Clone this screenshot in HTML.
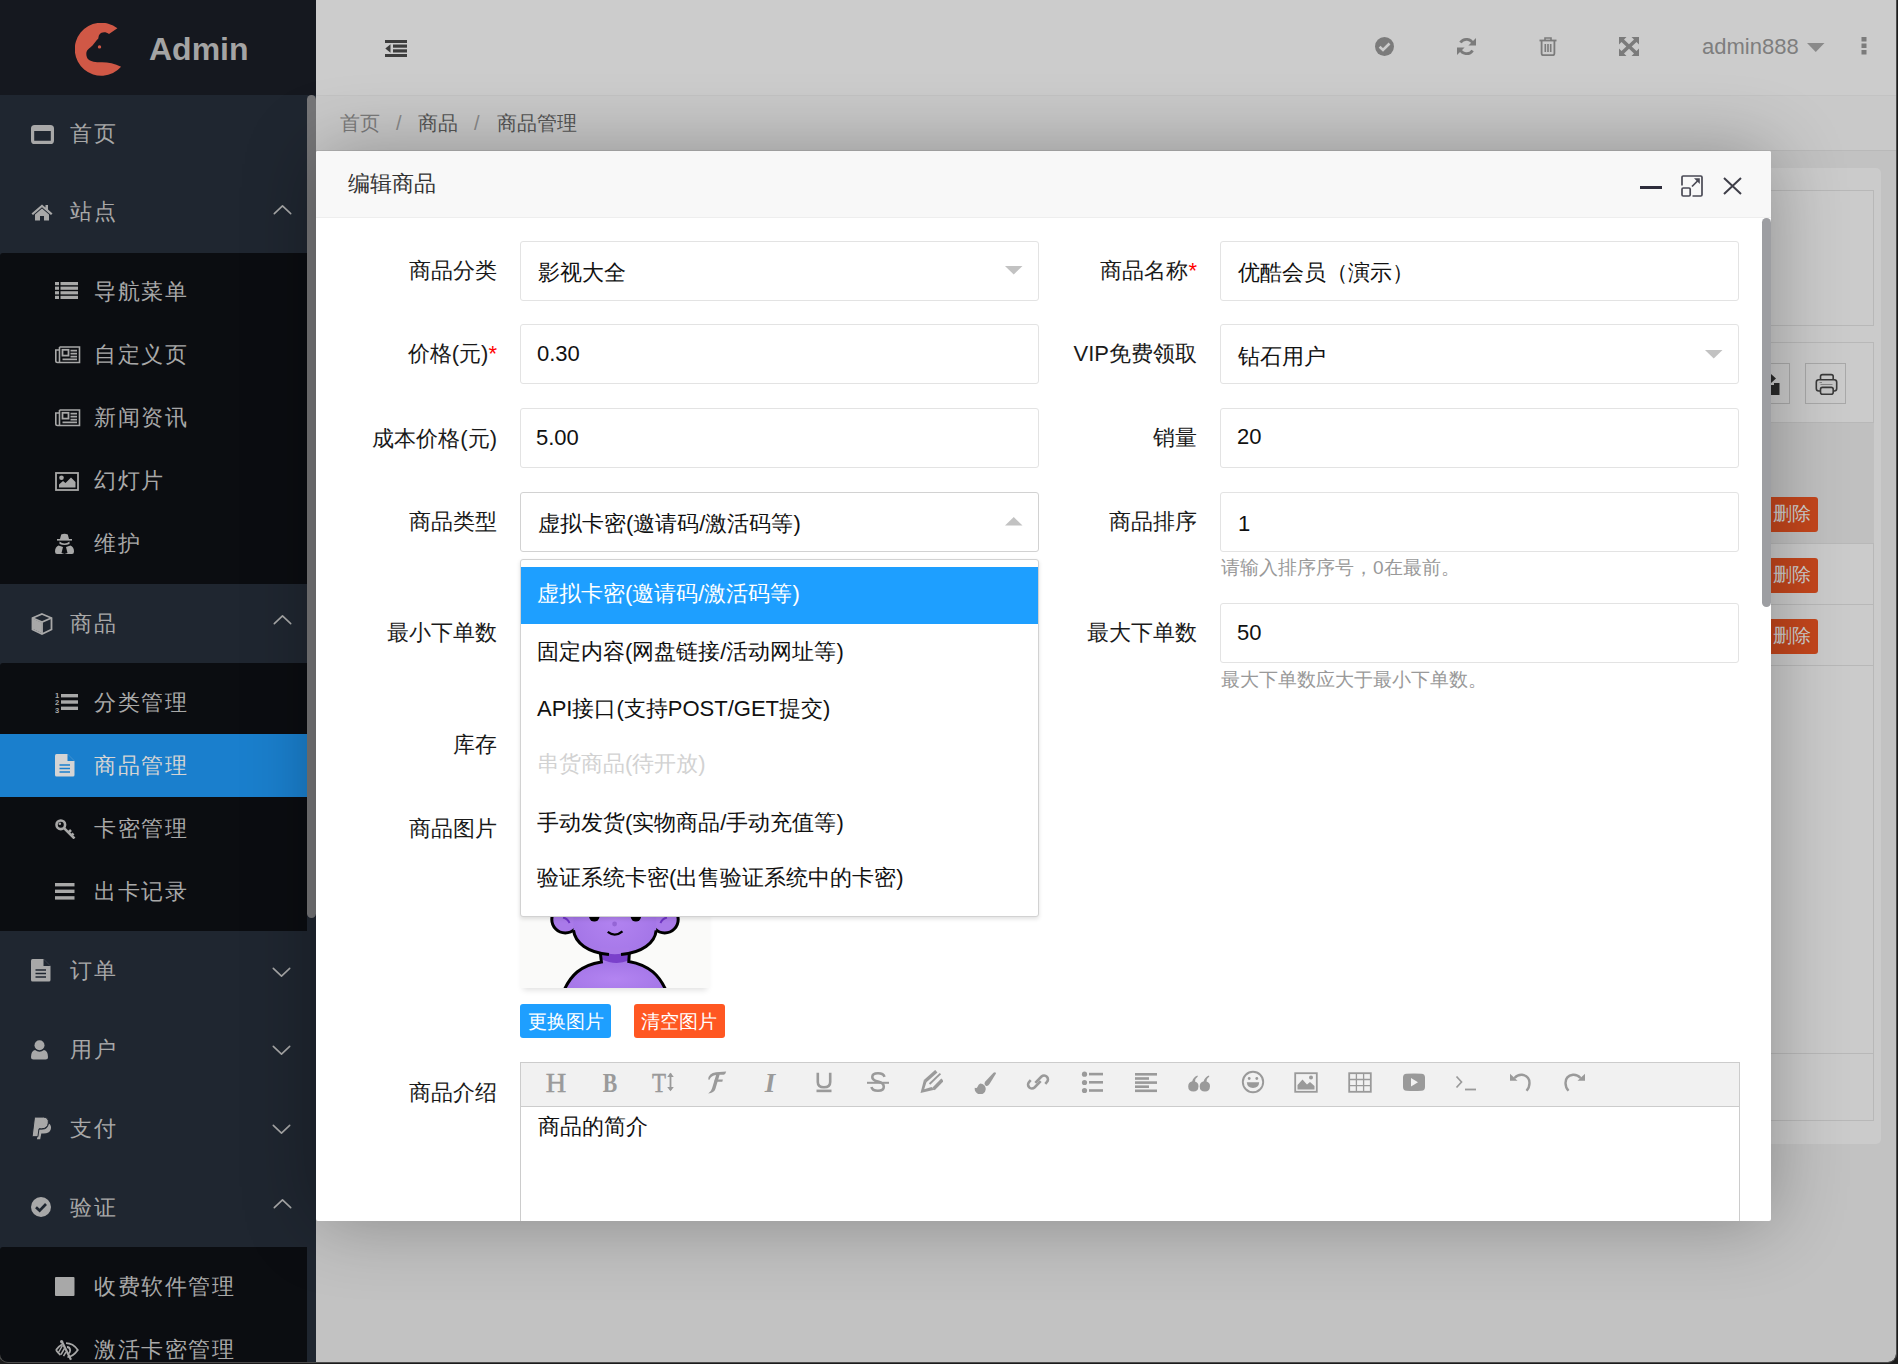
<!DOCTYPE html>
<html><head><meta charset="utf-8"><style>
html,body{margin:0;padding:0;width:1898px;height:1364px;overflow:hidden;background:#c2c2c2;font-family:"Liberation Sans",sans-serif}
.t{position:absolute;white-space:nowrap}
.b{position:absolute}
</style></head><body>
<div class="b" style="left:316px;top:0px;width:1582px;height:95px;background:#cccccc"></div>
<div class="b" style="left:316px;top:95px;width:1582px;height:1px;background:#c3c3c3"></div>
<div class="b" style="left:316px;top:96px;width:1582px;height:1268px;background:#c2c2c2"></div>
<div class="b" style="left:316px;top:96px;width:1582px;height:54px;background:#c9c9c9"></div>
<div class="b" style="left:316px;top:150px;width:1582px;height:1px;background:#b9b9b9"></div>
<div class="b" style="left:1580px;top:168px;width:301px;height:976px;background:#cbcbcb;border-radius:5px"></div>
<div class="b" style="left:1580px;top:190px;width:294px;height:136px;border:1px solid #b8b8b8;box-sizing:border-box"></div>
<div class="b" style="left:1580px;top:342px;width:294px;height:779px;border:1px solid #b8b8b8;box-sizing:border-box"></div>
<div class="b" style="left:1580px;top:422px;width:294px;height:1px;background:#b8b8b8"></div>
<div class="b" style="left:1580px;top:423px;width:294px;height:121px;background:#c0c0c0"></div>
<div class="b" style="left:1580px;top:543px;width:294px;height:1px;background:#b8b8b8"></div>
<div class="b" style="left:1580px;top:604px;width:294px;height:1px;background:#b8b8b8"></div>
<div class="b" style="left:1580px;top:665px;width:294px;height:1px;background:#b8b8b8"></div>
<div class="b" style="left:1580px;top:1053px;width:294px;height:1px;background:#b8b8b8"></div>
<div class="b" style="left:1745px;top:363px;width:45px;height:41px;border:1px solid #a9a9a9;box-sizing:border-box"></div>
<svg class="b" style="left:1771px;top:374px;" width="10" height="22" viewBox="0 0 10 22"><path d="M0 0 L5 4.5 L0 9 Z" fill="#2a2a2a"/><path d="M0 11 H3 V9 H8.5 V21 H0 Z" fill="#2a2a2a"/></svg>
<div class="b" style="left:1805px;top:363px;width:41px;height:41px;border:1px solid #a9a9a9;box-sizing:border-box"></div>
<svg class="b" style="left:1815px;top:373px;" width="23" height="23" viewBox="0 0 23 23"><rect x="5.5" y="1.6" width="12.7" height="6" rx="2" fill="none" stroke="#3a3a3a" stroke-width="1.6"/><rect x="1.3" y="6.8" width="20.4" height="11.2" rx="2.5" fill="#c6c6c6" stroke="#3a3a3a" stroke-width="1.6"/><path d="M4.5 9.5 H7 M5.5 11.5 H17.5" stroke="#777" stroke-width="0.8"/><rect x="5.5" y="14.4" width="12.7" height="6.8" rx="2" fill="#c6c6c6" stroke="#3a3a3a" stroke-width="1.6"/></svg>
<div class="b" style="left:1740px;top:497px;width:78px;height:35px;background:#c4461c;border-radius:3px"></div>
<div class="t" style="left:1773px;top:504px;font-size:19px;line-height:19px;color:#d0d0d0;font-weight:normal;">删除</div>
<div class="b" style="left:1740px;top:558px;width:78px;height:35px;background:#c4461c;border-radius:3px"></div>
<div class="t" style="left:1773px;top:565px;font-size:19px;line-height:19px;color:#d0d0d0;font-weight:normal;">删除</div>
<div class="b" style="left:1740px;top:619px;width:78px;height:35px;background:#c4461c;border-radius:3px"></div>
<div class="t" style="left:1773px;top:626px;font-size:19px;line-height:19px;color:#d0d0d0;font-weight:normal;">删除</div>
<svg class="b" style="left:385px;top:40px;" width="22" height="17" viewBox="0 0 22 17"><rect x="0" y="0" width="22" height="3" fill="#3d3d3d"/><rect x="8" y="4.5" width="14" height="3.2" fill="#3d3d3d"/><rect x="8" y="9.3" width="14" height="3.2" fill="#3d3d3d"/><rect x="0" y="14" width="22" height="3" fill="#3d3d3d"/><path d="M5.5 4.2 L0.3 8.5 L5.5 12.8 Z" fill="#3d3d3d"/></svg>
<svg class="b" style="left:1375px;top:37px;" width="19" height="19" viewBox="0 0 19 19"><circle cx="9.5" cy="9.5" r="9.5" fill="#7b7b7b"/><path d="M4.6 9.8 L8 13 L14.5 6.5" fill="none" stroke="#cccccc" stroke-width="2.6"/></svg>
<svg class="b" style="left:1457px;top:37px;" width="19" height="19" viewBox="0 0 19 19"><path d="M16.2 7.2 A7.2 7.2 0 0 0 3.4 5.6" fill="none" stroke="#7b7b7b" stroke-width="2.8"/><path d="M19 1 L19 8.6 L11.4 8.6 Z" fill="#7b7b7b"/><path d="M2.8 11.8 A7.2 7.2 0 0 0 15.6 13.4" fill="none" stroke="#7b7b7b" stroke-width="2.8"/><path d="M0 18 L0 10.4 L7.6 10.4 Z" fill="#7b7b7b"/></svg>
<svg class="b" style="left:1539px;top:37px;" width="18" height="19" viewBox="0 0 18 19"><path d="M0.5 3.5 H17.5" stroke="#7b7b7b" stroke-width="1.8"/><path d="M6 3.5 V1 H12 V3.5" fill="none" stroke="#7b7b7b" stroke-width="1.6"/><path d="M2.6 4 V16.5 Q2.6 18.2 4.3 18.2 H13.7 Q15.4 18.2 15.4 16.5 V4" fill="none" stroke="#7b7b7b" stroke-width="1.8"/><path d="M6.3 7 V15 M9 7 V15 M11.7 7 V15" stroke="#7b7b7b" stroke-width="1.6"/></svg>
<svg class="b" style="left:1619px;top:37px;" width="20" height="19" viewBox="0 0 20 19"><path d="M0 0 H7.5 L5 2.5 L10 7.3 L15 2.5 L12.5 0 H20 V7.5 L17.5 5 L12.7 9.5 L17.5 14 L20 11.5 V19 H12.5 L15 16.5 L10 11.7 L5 16.5 L7.5 19 H0 V11.5 L2.5 14 L7.3 9.5 L2.5 5 L0 7.5 Z" fill="#7b7b7b"/></svg>
<div class="t" style="left:1702px;top:36px;font-size:22px;line-height:22px;color:#7e7e7e;font-weight:normal;">admin888</div>
<svg class="b" style="left:1807px;top:43px;" width="18" height="9" viewBox="0 0 18 9"><path d="M0 0 H17.5 L8.75 9 Z" fill="#8a8a8a"/></svg>
<svg class="b" style="left:1861px;top:37px;" width="6" height="18" viewBox="0 0 6 18"><rect x="0.5" y="0" width="5" height="4.5" fill="#7b7b7b"/><rect x="0.5" y="6.5" width="5" height="4.5" fill="#7b7b7b"/><rect x="0.5" y="13" width="5" height="4.5" fill="#7b7b7b"/></svg>
<div class="t" style="left:340px;top:113px;font-size:20px;line-height:20px;color:#7b7b7b;font-weight:normal;">首页</div>
<div class="t" style="left:396px;top:113px;font-size:20px;line-height:20px;color:#8a8a8a;font-weight:normal;">/</div>
<div class="t" style="left:418px;top:113px;font-size:20px;line-height:20px;color:#565656;font-weight:normal;">商品</div>
<div class="t" style="left:474px;top:113px;font-size:20px;line-height:20px;color:#8a8a8a;font-weight:normal;">/</div>
<div class="t" style="left:497px;top:113px;font-size:20px;line-height:20px;color:#565656;font-weight:normal;">商品管理</div>
<div class="b" style="left:0px;top:0px;width:316px;height:95px;background:#15181f"></div>
<div class="b" style="left:0px;top:95px;width:316px;height:1269px;background:#1f2630"></div>
<svg class="b" style="left:75px;top:23px;" width="47" height="53" viewBox="0 0 47 53"><path d="M42.4 5.2 L34 11 C31 8.5 26.5 8.5 24.5 11.5 C23.5 13 23.5 14.5 23.3 15.5 C21 18 19 20.5 17.5 22.5 C15 25 12 26.5 11.5 29 C11 32 11.5 35 13.5 36.5 C16 38.5 20 39.3 27 39.3 C33 39.5 40 40.5 46.1 43.8 A26.5 26.5 0 1 1 42.4 5.2 Z" fill="#d05846"/><circle cx="24.5" cy="23.9" r="1.7" fill="#d05846"/></svg>
<div class="t" style="left:149px;top:33px;font-size:32px;line-height:32px;color:#a4a4a4;font-weight:bold;">Admin</div>
<div class="b" style="left:0px;top:253px;width:307px;height:331px;background:#0b0d11;border-top-left-radius:3px"></div>
<div class="b" style="left:0px;top:663px;width:307px;height:268px;background:#0b0d11;border-top-left-radius:3px"></div>
<div class="b" style="left:0px;top:1247px;width:307px;height:117px;background:#0b0d11;border-top-left-radius:3px"></div>
<div class="b" style="left:0px;top:734px;width:307px;height:63px;background:#1a7fcd"></div>
<div class="b" style="left:307px;top:95px;width:9px;height:823px;background:#767678;border-radius:4.5px"></div>
<svg class="b" style="left:31px;top:125px;" width="23" height="19" viewBox="0 0 23 19"><rect x="1.6" y="1.6" width="19.8" height="15.8" rx="2" fill="none" stroke="#a8a8a8" stroke-width="3.2"/><rect x="1" y="1" width="21" height="5" fill="#a8a8a8"/></svg>
<div class="t" style="left:70px;top:123px;font-size:22px;line-height:22px;color:#a8a8a8;font-weight:normal;letter-spacing:1.5px">首页</div>
<svg class="b" style="left:31px;top:204px;" width="22" height="17" viewBox="0 0 22 17"><path d="M11 0.5 L0.5 9.5 L2 11 L11 3.3 L20 11 L21.5 9.5 L17 5.6 V1 H14.5 V3.5 Z" fill="#a8a8a8"/><path d="M4 10.5 L11 4.6 L18 10.5 V16.5 H13 V12 H9 V16.5 H4 Z" fill="#a8a8a8"/></svg>
<div class="t" style="left:70px;top:201px;font-size:22px;line-height:22px;color:#a8a8a8;font-weight:normal;letter-spacing:1.5px">站点</div>
<svg class="b" style="left:273px;top:204px;" width="19" height="11" viewBox="0 0 19 11"><path d="M1.3 9.7 L9.5 1.8 L17.7 9.7" fill="none" stroke="#a8a8a8" stroke-width="1.6" stroke-linecap="round" stroke-linejoin="round"/></svg>
<svg class="b" style="left:55px;top:282px;" width="23" height="17" viewBox="0 0 23 17"><rect x="0" y="0" width="4" height="3.2" fill="#a8a8a8"/><rect x="5.5" y="0" width="17.5" height="3.2" fill="#a8a8a8"/><rect x="0" y="4.6" width="4" height="3.2" fill="#a8a8a8"/><rect x="5.5" y="4.6" width="17.5" height="3.2" fill="#a8a8a8"/><rect x="0" y="9.2" width="4" height="3.2" fill="#a8a8a8"/><rect x="5.5" y="9.2" width="17.5" height="3.2" fill="#a8a8a8"/><rect x="0" y="13.8" width="4" height="3.2" fill="#a8a8a8"/><rect x="5.5" y="13.8" width="17.5" height="3.2" fill="#a8a8a8"/></svg>
<div class="t" style="left:94px;top:281px;font-size:22px;line-height:22px;color:#a8a8a8;font-weight:normal;letter-spacing:1.5px">导航菜单</div>
<svg class="b" style="left:55px;top:346px;" width="26" height="18" viewBox="0 0 26 18"><path d="M4.5 1 H24.5 V16.5 H2.5 Q0.8 16.5 0.8 14.8 V4 H4.5" fill="none" stroke="#a8a8a8" stroke-width="1.6"/><path d="M4.5 1 V16.5" stroke="#a8a8a8" stroke-width="1.6"/><rect x="7.5" y="3.8" width="6" height="5.8" fill="none" stroke="#a8a8a8" stroke-width="1.8"/><path d="M15.5 4.6 H22 M15.5 7.6 H22 M15.5 10.6 H22 M7.5 13.4 H22" stroke="#a8a8a8" stroke-width="1.6"/></svg>
<div class="t" style="left:94px;top:344px;font-size:22px;line-height:22px;color:#a8a8a8;font-weight:normal;letter-spacing:1.5px">自定义页</div>
<svg class="b" style="left:55px;top:409px;" width="26" height="18" viewBox="0 0 26 18"><path d="M4.5 1 H24.5 V16.5 H2.5 Q0.8 16.5 0.8 14.8 V4 H4.5" fill="none" stroke="#a8a8a8" stroke-width="1.6"/><path d="M4.5 1 V16.5" stroke="#a8a8a8" stroke-width="1.6"/><rect x="7.5" y="3.8" width="6" height="5.8" fill="none" stroke="#a8a8a8" stroke-width="1.8"/><path d="M15.5 4.6 H22 M15.5 7.6 H22 M15.5 10.6 H22 M7.5 13.4 H22" stroke="#a8a8a8" stroke-width="1.6"/></svg>
<div class="t" style="left:94px;top:407px;font-size:22px;line-height:22px;color:#a8a8a8;font-weight:normal;letter-spacing:1.5px">新闻资讯</div>
<svg class="b" style="left:55px;top:472px;" width="24" height="19" viewBox="0 0 24 19"><rect x="1" y="1" width="22" height="17" fill="none" stroke="#a8a8a8" stroke-width="1.8"/><circle cx="6.5" cy="5.8" r="2.3" fill="#a8a8a8"/><path d="M4 15.5 V12.5 L8 9 L10.5 11 L16 5.5 L20.5 10 V15.5 Z" fill="#a8a8a8"/></svg>
<div class="t" style="left:94px;top:470px;font-size:22px;line-height:22px;color:#a8a8a8;font-weight:normal;letter-spacing:1.5px">幻灯片</div>
<svg class="b" style="left:55px;top:533px;" width="19" height="21" viewBox="0 0 19 21"><path d="M5 6 L6.2 1.5 Q9.5 0.2 12.8 1.5 L14 6 Z" fill="#a8a8a8"/><rect x="2" y="6" width="15" height="1.6" fill="#a8a8a8"/><path d="M4.5 8.5 Q9.5 12.5 14.5 8.5 L14.5 11 Q9.5 13 4.5 11 Z" fill="#a8a8a8"/><path d="M3.5 12.5 Q0 14 0 18.5 Q0 21 2 21 H17 Q19 21 19 18.5 Q19 14 15.5 12.5 L11 14 L12.5 20 L9.5 21 L6.5 20 L8 14 Z" fill="#a8a8a8"/></svg>
<div class="t" style="left:94px;top:533px;font-size:22px;line-height:22px;color:#a8a8a8;font-weight:normal;letter-spacing:1.5px">维护</div>
<svg class="b" style="left:31px;top:613px;" width="22" height="22" viewBox="0 0 22 22"><path d="M11 1 L20.5 5 V16.5 L11 21 L1.5 16.5 V5 Z" fill="none" stroke="#a8a8a8" stroke-width="1.8"/><path d="M1.5 5 L11 9 L20.5 5 M11 9 V21" fill="none" stroke="#a8a8a8" stroke-width="1.8"/><path d="M2 5.8 L10.5 9.5 V20 L2 16 Z" fill="#a8a8a8"/></svg>
<div class="t" style="left:70px;top:613px;font-size:22px;line-height:22px;color:#a8a8a8;font-weight:normal;letter-spacing:1.5px">商品</div>
<svg class="b" style="left:273px;top:614px;" width="19" height="11" viewBox="0 0 19 11"><path d="M1.3 9.7 L9.5 1.8 L17.7 9.7" fill="none" stroke="#a8a8a8" stroke-width="1.6" stroke-linecap="round" stroke-linejoin="round"/></svg>
<svg class="b" style="left:55px;top:691px;" width="24" height="22" viewBox="0 0 24 22"><text x="0" y="6.5" font-size="7.5" font-family="Liberation Sans" font-weight="bold" fill="#a8a8a8">1</text><text x="0" y="14" font-size="7.5" font-family="Liberation Sans" font-weight="bold" fill="#a8a8a8">2</text><text x="0" y="21.5" font-size="7.5" font-family="Liberation Sans" font-weight="bold" fill="#a8a8a8">3</text><rect x="6" y="3" width="17" height="3.4" fill="#a8a8a8"/><rect x="6" y="9.3" width="17" height="3.4" fill="#a8a8a8"/><rect x="6" y="15.6" width="17" height="3.4" fill="#a8a8a8"/></svg>
<div class="t" style="left:94px;top:692px;font-size:22px;line-height:22px;color:#a8a8a8;font-weight:normal;letter-spacing:1.5px">分类管理</div>
<svg class="b" style="left:55px;top:754px;" width="20" height="23" viewBox="0 0 20 23"><path d="M0 1.5 Q0 0 1.5 0 H12.5 L19.5 7 V21 Q19.5 22.5 18 22.5 H1.5 Q0 22.5 0 21 Z" fill="#d4d4d4"/><path d="M12.5 0 V7 H19.5" fill="#1a7fcd"/><path d="M4.5 11 H15 M4.5 14.5 H15 M4.5 18 H15" stroke="#1a7fcd" stroke-width="1.6"/></svg>
<div class="t" style="left:94px;top:755px;font-size:22px;line-height:22px;color:#d4d4d4;font-weight:normal;letter-spacing:1.5px">商品管理</div>
<svg class="b" style="left:55px;top:819px;" width="21" height="20" viewBox="0 0 21 20"><circle cx="5.8" cy="5.8" r="4.3" fill="none" stroke="#a8a8a8" stroke-width="2.6"/><circle cx="4.8" cy="4.8" r="1.3" fill="#a8a8a8"/><path d="M8.8 8.8 L19.5 19.5 M13.5 13.5 L16 11 M16.5 16.5 L18.5 14.5" stroke="#a8a8a8" stroke-width="2.6"/></svg>
<div class="t" style="left:94px;top:818px;font-size:22px;line-height:22px;color:#a8a8a8;font-weight:normal;letter-spacing:1.5px">卡密管理</div>
<svg class="b" style="left:55px;top:883px;" width="20" height="17" viewBox="0 0 20 17"><rect x="0" y="0" width="19.5" height="3.4" fill="#a8a8a8"/><rect x="0" y="6.6" width="19.5" height="3.4" fill="#a8a8a8"/><rect x="0" y="13.2" width="19.5" height="3.4" fill="#a8a8a8"/></svg>
<div class="t" style="left:94px;top:881px;font-size:22px;line-height:22px;color:#a8a8a8;font-weight:normal;letter-spacing:1.5px">出卡记录</div>
<svg class="b" style="left:31px;top:959px;" width="20" height="23" viewBox="0 0 20 23"><path d="M0 1.5 Q0 0 1.5 0 H12.5 L19.5 7 V21 Q19.5 22.5 18 22.5 H1.5 Q0 22.5 0 21 Z" fill="#a8a8a8"/><path d="M12.5 0 V7 H19.5" fill="#1f2630"/><path d="M4.5 11 H15 M4.5 14.5 H15 M4.5 18 H15" stroke="#1f2630" stroke-width="1.6"/></svg>
<div class="t" style="left:70px;top:960px;font-size:22px;line-height:22px;color:#a8a8a8;font-weight:normal;letter-spacing:1.5px">订单</div>
<svg class="b" style="left:272px;top:967px;" width="19" height="11" viewBox="0 0 19 11"><path d="M1.3 1.3 L9.5 9.2 L17.7 1.3" fill="none" stroke="#a8a8a8" stroke-width="1.6" stroke-linecap="round" stroke-linejoin="round"/></svg>
<svg class="b" style="left:31px;top:1040px;" width="17" height="20" viewBox="0 0 17 20"><circle cx="8.5" cy="5.3" r="5" fill="#a8a8a8"/><path d="M0 17 Q0 11 4 10 Q8.5 13.5 13 10 Q17 11 17 17 Q17 19.5 14.5 19.5 H2.5 Q0 19.5 0 17 Z" fill="#a8a8a8"/></svg>
<div class="t" style="left:70px;top:1039px;font-size:22px;line-height:22px;color:#a8a8a8;font-weight:normal;letter-spacing:1.5px">用户</div>
<svg class="b" style="left:272px;top:1045px;" width="19" height="11" viewBox="0 0 19 11"><path d="M1.3 1.3 L9.5 9.2 L17.7 1.3" fill="none" stroke="#a8a8a8" stroke-width="1.6" stroke-linecap="round" stroke-linejoin="round"/></svg>
<svg class="b" style="left:31px;top:1117px;" width="21" height="23" viewBox="0 0 21 23"><path d="M5.9 22.2 L7.8 12.5 H11 Q17 12.5 17.8 6.5 Q20.8 8.5 19.8 12.2 Q18.5 16.6 12.5 16.6 H10.3 L9.2 22.2 Z" fill="#a8a8a8"/><path d="M1.1 19.7 L3.5 0.1 H12.5 Q18 0.5 17.3 6 Q16.5 11.8 10.5 11.8 H8 L6.9 19.7 Z" fill="#a8a8a8" stroke="#1f2630" stroke-width="1"/></svg>
<div class="t" style="left:70px;top:1118px;font-size:22px;line-height:22px;color:#a8a8a8;font-weight:normal;letter-spacing:1.5px">支付</div>
<svg class="b" style="left:272px;top:1124px;" width="19" height="11" viewBox="0 0 19 11"><path d="M1.3 1.3 L9.5 9.2 L17.7 1.3" fill="none" stroke="#a8a8a8" stroke-width="1.6" stroke-linecap="round" stroke-linejoin="round"/></svg>
<svg class="b" style="left:31px;top:1197px;" width="20" height="20" viewBox="0 0 20 20"><circle cx="10" cy="10" r="10" fill="#a8a8a8"/><path d="M5 10.3 L8.6 13.6 L15 7" fill="none" stroke="#1f2630" stroke-width="2.7"/></svg>
<div class="t" style="left:70px;top:1197px;font-size:22px;line-height:22px;color:#a8a8a8;font-weight:normal;letter-spacing:1.5px">验证</div>
<svg class="b" style="left:273px;top:1198px;" width="19" height="11" viewBox="0 0 19 11"><path d="M1.3 9.7 L9.5 1.8 L17.7 9.7" fill="none" stroke="#a8a8a8" stroke-width="1.6" stroke-linecap="round" stroke-linejoin="round"/></svg>
<svg class="b" style="left:55px;top:1277px;" width="20" height="19" viewBox="0 0 20 19"><rect x="0" y="0" width="19.5" height="19" rx="1" fill="#a8a8a8"/></svg>
<div class="t" style="left:94px;top:1276px;font-size:22px;line-height:22px;color:#a8a8a8;font-weight:normal;letter-spacing:1.5px">收费软件管理</div>
<svg class="b" style="left:55px;top:1340px;" width="24" height="21" viewBox="0 0 24 21"><path d="M11 3.2 Q18 3.2 22.8 10 Q18 16.8 12.5 17" fill="none" stroke="#a8a8a8" stroke-width="1.8"/><path d="M1 10 Q3.5 6.3 7 4.5 M1 10 Q3 13 5.5 15" fill="none" stroke="#a8a8a8" stroke-width="1.8"/><path d="M3.5 12.5 L7.5 5.5 M6 14.5 L9.5 8.5 M8.5 16.2 L11 12" stroke="#a8a8a8" stroke-width="1.5"/><path d="M6.8 1.5 L16 19.8" stroke="#a8a8a8" stroke-width="2.2"/><circle cx="6.6" cy="1.6" r="1.6" fill="#a8a8a8"/><path d="M12 7 Q15 7 15.2 10.5 Q15 13 13.5 13.5" fill="none" stroke="#a8a8a8" stroke-width="1.8"/></svg>
<div class="t" style="left:94px;top:1339px;font-size:22px;line-height:22px;color:#a8a8a8;font-weight:normal;letter-spacing:1.5px">激活卡密管理</div>
<div class="b" style="left:316px;top:151px;width:1455px;height:1070px;background:#fff;border-radius:2px;box-shadow:1px 1px 75px rgba(0,0,0,.3)"></div>
<div class="b" style="left:316px;top:151px;width:1455px;height:66px;background:#f8f8f8;border-radius:2px 2px 0 0"></div>
<div class="b" style="left:316px;top:217px;width:1455px;height:1px;background:#eeeeee"></div>
<div class="t" style="left:348px;top:173px;font-size:22px;line-height:22px;color:#333;font-weight:normal;">编辑商品</div>
<div class="b" style="left:1640px;top:186px;width:22px;height:3px;background:#2e2d3c"></div>
<svg class="b" style="left:1681px;top:175px;" width="22" height="22" viewBox="0 0 22 22"><path d="M1 10.5 V2.2 Q1 1 2.2 1 H19.8 Q21 1 21 2.2 V19.8 Q21 21 19.8 21 H11.5" fill="none" stroke="#4a4a55" stroke-width="1.7"/><rect x="1" y="13" width="8.2" height="8" rx="1.2" fill="none" stroke="#4a4a55" stroke-width="1.7"/><path d="M11 11.5 L17.5 5" stroke="#4a4a55" stroke-width="1.7"/><path d="M13 3.2 H18.8 V9 Z" fill="#4a4a55"/></svg>
<svg class="b" style="left:1723px;top:177px;" width="19" height="18" viewBox="0 0 19 18"><path d="M1 1 L18 17 M18 1 L1 17" stroke="#3e3e48" stroke-width="2"/></svg>
<div class="b" style="left:1762px;top:218px;width:9px;height:389px;background:#9d9ea2;border-radius:4.5px"></div>
<div class="t" style="right:1401px;top:260px;font-size:22px;line-height:22px;color:#1a1a1a;text-align:right;font-weight:normal;">商品分类</div>
<div class="b" style="left:520px;top:241px;width:519px;height:60px;border:1px solid #e3e3e3;border-radius:3px;box-sizing:border-box;background:#fff"></div>
<div class="t" style="left:538px;top:262px;font-size:22px;line-height:22px;color:#111;font-weight:normal;">影视大全</div>
<svg class="b" style="left:1005px;top:266px;" width="18" height="9" viewBox="0 0 18 9"><path d="M0 0 H17.5 L8.75 8.5 Z" fill="#c2c2c2"/></svg>
<div class="t" style="right:701px;top:260px;font-size:22px;line-height:22px;color:#1a1a1a;text-align:right;font-weight:normal;">商品名称<span style="color:#ff0000">*</span></div>
<div class="b" style="left:1220px;top:241px;width:519px;height:60px;border:1px solid #e3e3e3;border-radius:3px;box-sizing:border-box;background:#fff"></div>
<div class="t" style="left:1238px;top:262px;font-size:22px;line-height:22px;color:#111;font-weight:normal;">优酷会员（演示）</div>
<div class="t" style="right:1401px;top:343px;font-size:22px;line-height:22px;color:#1a1a1a;text-align:right;font-weight:normal;">价格(元)<span style="color:#ff0000">*</span></div>
<div class="b" style="left:520px;top:324px;width:519px;height:60px;border:1px solid #e3e3e3;border-radius:3px;box-sizing:border-box;background:#fff"></div>
<div class="t" style="left:537px;top:343px;font-size:22px;line-height:22px;color:#111;font-weight:normal;">0.30</div>
<div class="t" style="right:701px;top:343px;font-size:22px;line-height:22px;color:#1a1a1a;text-align:right;font-weight:normal;">VIP免费领取</div>
<div class="b" style="left:1220px;top:324px;width:519px;height:60px;border:1px solid #e3e3e3;border-radius:3px;box-sizing:border-box;background:#fff"></div>
<div class="t" style="left:1238px;top:346px;font-size:22px;line-height:22px;color:#111;font-weight:normal;">钻石用户</div>
<svg class="b" style="left:1705px;top:350px;" width="18" height="9" viewBox="0 0 18 9"><path d="M0 0 H17.5 L8.75 8.5 Z" fill="#c2c2c2"/></svg>
<div class="t" style="right:1401px;top:428px;font-size:22px;line-height:22px;color:#1a1a1a;text-align:right;font-weight:normal;">成本价格(元)</div>
<div class="b" style="left:520px;top:408px;width:519px;height:60px;border:1px solid #e3e3e3;border-radius:3px;box-sizing:border-box;background:#fff"></div>
<div class="t" style="left:536px;top:427px;font-size:22px;line-height:22px;color:#111;font-weight:normal;">5.00</div>
<div class="t" style="right:701px;top:427px;font-size:22px;line-height:22px;color:#1a1a1a;text-align:right;font-weight:normal;">销量</div>
<div class="b" style="left:1220px;top:408px;width:519px;height:60px;border:1px solid #e3e3e3;border-radius:3px;box-sizing:border-box;background:#fff"></div>
<div class="t" style="left:1237px;top:426px;font-size:22px;line-height:22px;color:#111;font-weight:normal;">20</div>
<div class="t" style="right:1401px;top:511px;font-size:22px;line-height:22px;color:#1a1a1a;text-align:right;font-weight:normal;">商品类型</div>
<div class="b" style="left:520px;top:492px;width:519px;height:60px;border:1px solid #d2d2d2;border-radius:3px;box-sizing:border-box;background:#fff"></div>
<div class="t" style="left:538px;top:513px;font-size:22px;line-height:22px;color:#111;font-weight:normal;">虚拟卡密(邀请码/激活码等)</div>
<svg class="b" style="left:1005px;top:517px;" width="18" height="9" viewBox="0 0 18 9"><path d="M0 8.5 H17.5 L8.75 0 Z" fill="#c2c2c2"/></svg>
<div class="t" style="right:701px;top:511px;font-size:22px;line-height:22px;color:#1a1a1a;text-align:right;font-weight:normal;">商品排序</div>
<div class="b" style="left:1220px;top:492px;width:519px;height:60px;border:1px solid #e3e3e3;border-radius:3px;box-sizing:border-box;background:#fff"></div>
<div class="t" style="left:1238px;top:513px;font-size:22px;line-height:22px;color:#111;font-weight:normal;">1</div>
<div class="t" style="left:1221px;top:558px;font-size:19px;line-height:19px;color:#999;font-weight:normal;">请输入排序序号，0在最前。</div>
<div class="t" style="right:1401px;top:622px;font-size:22px;line-height:22px;color:#1a1a1a;text-align:right;font-weight:normal;">最小下单数</div>
<div class="t" style="right:701px;top:622px;font-size:22px;line-height:22px;color:#1a1a1a;text-align:right;font-weight:normal;">最大下单数</div>
<div class="b" style="left:1220px;top:603px;width:519px;height:60px;border:1px solid #e3e3e3;border-radius:3px;box-sizing:border-box;background:#fff"></div>
<div class="t" style="left:1237px;top:622px;font-size:22px;line-height:22px;color:#111;font-weight:normal;">50</div>
<div class="t" style="left:1221px;top:670px;font-size:19px;line-height:19px;color:#999;font-weight:normal;">最大下单数应大于最小下单数。</div>
<div class="t" style="right:1401px;top:734px;font-size:22px;line-height:22px;color:#1a1a1a;text-align:right;font-weight:normal;">库存</div>
<div class="t" style="right:1401px;top:818px;font-size:22px;line-height:22px;color:#1a1a1a;text-align:right;font-weight:normal;">商品图片</div>
<div class="b" style="left:520px;top:780px;width:190px;height:208px;background:#fafaf9;box-shadow:0 5px 6px -3px rgba(0,0,0,.13);overflow:hidden"><svg width="190" height="208" viewBox="0 0 190 208" style="position:absolute;left:0;top:0"><defs><radialGradient id="pg" cx="0.5" cy="0.55" r="0.6"><stop offset="0" stop-color="#b384f1"/><stop offset="1" stop-color="#a274e6"/></radialGradient></defs><circle cx="45.3" cy="139.5" r="13.5" fill="#a97ae9" stroke="#000" stroke-width="3"/><circle cx="144.7" cy="139.5" r="13.5" fill="#a97ae9" stroke="#000" stroke-width="3"/><path d="M53.5 90 V150.3 C55 163 68 172.5 90 174.2 L100 174.2 C122 172.5 135 163 136.2 150.3 V90 Z" fill="url(#pg)"/><rect x="80.5" y="168" width="28.5" height="16" fill="#a97ae9"/><path d="M81.4 181.9 C61 185 50 195 42.5 214 H147.5 C140 195 129 185 108.8 181.4 Z" fill="url(#pg)"/><path d="M80.5 172.5 Q95 176 109 172.5 L108.8 180.5 Q95 186 81.4 179 Z" fill="#7a40cb"/><path d="M53.5 150.3 C55 163 68 172.5 89 174.5 M136.2 150.3 C135 163 122 172.5 101 174.5" fill="none" stroke="#000" stroke-width="3"/><path d="M80.4 173.5 L81.4 181.9 C61 185 50 195 42.5 214 M109.3 173.5 L108.8 181.4 C129 185 140 195 147.5 214" fill="none" stroke="#000" stroke-width="3"/><path d="M87.7 151.9 Q95 157.5 102.5 151.3" fill="none" stroke="#000" stroke-width="2.2"/><ellipse cx="74.3" cy="137.2" rx="5" ry="4.2" fill="#000"/><ellipse cx="115.9" cy="137.2" rx="5" ry="4.2" fill="#000"/><circle cx="94.6" cy="144" r="2.4" fill="#9566d6"/><path d="M43 137.5 Q47.5 138.5 49.6 143 M147 137.5 Q142.5 138.5 140.4 143" fill="none" stroke="#6f35c4" stroke-width="1.8"/></svg></div>
<div class="b" style="left:520px;top:1004px;width:91px;height:34px;background:#1e9fff;border-radius:3px"></div>
<div class="t" style="left:528px;top:1012px;font-size:19px;line-height:19px;color:#fff;font-weight:normal;">更换图片</div>
<div class="b" style="left:634px;top:1004px;width:91px;height:34px;background:#ff5722;border-radius:3px"></div>
<div class="t" style="left:641px;top:1012px;font-size:19px;line-height:19px;color:#fff;font-weight:normal;">清空图片</div>
<div class="t" style="right:1401px;top:1082px;font-size:22px;line-height:22px;color:#1a1a1a;text-align:right;font-weight:normal;">商品介绍</div>
<div class="b" style="left:520px;top:1062px;width:1220px;height:159px;border:1px solid #cccccc;border-bottom:none;box-sizing:border-box;background:#fff"></div>
<div class="b" style="left:521px;top:1063px;width:1218px;height:43px;background:#f1f1f1;border-bottom:1px solid #cccccc"></div>
<div class="t" style="left:538px;top:1116px;font-size:22px;line-height:22px;color:#111;font-weight:normal;">商品的简介</div>
<svg class="b" style="left:544px;top:1070px;" width="24" height="24" viewBox="0 0 24 24"><text x="12" y="21.6" text-anchor="middle" font-family="Liberation Serif" font-size="27.5" fill="#9a9a9a" stroke="#9a9a9a" stroke-width="0.5" textLength="20.5" lengthAdjust="spacingAndGlyphs">H</text></svg>
<svg class="b" style="left:598px;top:1070px;" width="24" height="24" viewBox="0 0 24 24"><text x="12" y="21.6" text-anchor="middle" font-family="Liberation Serif" font-size="27" font-weight="bold" fill="#9a9a9a" textLength="14.5" lengthAdjust="spacingAndGlyphs">B</text></svg>
<svg class="b" style="left:651px;top:1070px;" width="24" height="24" viewBox="0 0 24 24"><text x="1" y="21.6" font-family="Liberation Serif" font-size="27.5" fill="#9a9a9a" stroke="#9a9a9a" stroke-width="0.5" textLength="14" lengthAdjust="spacingAndGlyphs">T</text><path d="M19.5 3.5 V20" stroke="#9a9a9a" stroke-width="1.8"/><path d="M16.2 7 L19.5 2.8 L22.8 7 Z M16.2 17 L19.5 21.2 L22.8 17 Z" fill="#9a9a9a"/></svg>
<svg class="b" style="left:705px;top:1070px;" width="24" height="24" viewBox="0 0 24 24"><path d="M3.2 9.6 Q3.6 3 11 2.3 L21.2 1.5 Q20.6 4.3 18.6 4.8 L14.6 4.8 L10.4 19 Q9.2 22.9 3.2 23.4 Q6.2 21.6 7 18.5 L11.1 4.9 Q6.2 5.2 4.5 9.8 Z" fill="#9a9a9a"/><path d="M9.9 9.5 H17.9 L17.3 11.7 H9.3 Z" fill="#9a9a9a"/></svg>
<svg class="b" style="left:758px;top:1070px;" width="24" height="24" viewBox="0 0 24 24"><text x="12" y="21.6" text-anchor="middle" font-family="Liberation Serif" font-size="27" font-style="italic" font-weight="bold" fill="#9a9a9a">I</text></svg>
<svg class="b" style="left:812px;top:1070px;" width="24" height="24" viewBox="0 0 24 24"><path d="M5.8 2.8 V12 Q5.8 17.3 12 17.3 Q18.2 17.3 18.2 12 V2.8" fill="none" stroke="#9a9a9a" stroke-width="2.6"/><rect x="4.5" y="19.6" width="15" height="2.6" fill="#9a9a9a"/></svg>
<svg class="b" style="left:866px;top:1070px;" width="24" height="24" viewBox="0 0 24 24"><path d="M18.5 6.8 Q17.5 3.3 12 3.3 Q6.3 3.3 6.3 7 Q6.3 10.3 12 11.5 Q17.8 12.8 17.8 16.8 Q17.8 20.8 12 20.8 Q6.2 20.8 5.5 17" fill="none" stroke="#9a9a9a" stroke-width="2.6"/><rect x="1" y="11.8" width="22" height="2" fill="#9a9a9a"/></svg>
<svg class="b" style="left:919px;top:1070px;" width="24" height="24" viewBox="0 0 24 24"><path d="M6.3 11 L17.3 1.2" stroke="#9a9a9a" stroke-width="3.4"/><path d="M10.6 14 L21.4 3.6" stroke="#9a9a9a" stroke-width="1.9"/><path d="M14.5 19 L23.5 9.8" stroke="#9a9a9a" stroke-width="3.4"/><path d="M1.5 23 L5 9.6 L7.5 12 L5.2 19.3 L12.5 17 L15.5 19.8 Z" fill="#9a9a9a"/></svg>
<svg class="b" style="left:973px;top:1070px;" width="24" height="24" viewBox="0 0 24 24"><path d="M12.5 15.5 Q10.5 13.5 12.5 11.2 L20.5 2.8 Q22.5 1.5 23 3.5 L16.5 14 Q14.5 17 12.5 15.5 Z" fill="#9a9a9a"/><path d="M7.3 13.4 A5.5 5.5 0 1 1 1.9 17.5 Q3 18.8 4.3 17.2 Q5.5 14 7.3 13.4 Z" fill="#9a9a9a"/></svg>
<svg class="b" style="left:1026px;top:1070px;" width="24" height="24" viewBox="0 0 24 24"><path d="M9.3 12.8 L15.5 6.5 A3.9 3.9 0 0 1 21 12 L19.3 13.8" fill="none" stroke="#9a9a9a" stroke-width="2.6"/><path d="M14.7 11.2 L8.5 17.5 A3.9 3.9 0 0 1 3 12 L4.7 10.2" fill="none" stroke="#9a9a9a" stroke-width="2.6"/></svg>
<svg class="b" style="left:1080px;top:1070px;" width="24" height="24" viewBox="0 0 24 24"><circle cx="4.5" cy="4.2" r="2.6" fill="#9a9a9a"/><circle cx="4.5" cy="12.5" r="2.6" fill="#9a9a9a"/><circle cx="4.5" cy="20.5" r="2.6" fill="#9a9a9a"/><rect x="9" y="2.8" width="14" height="2.6" fill="#9a9a9a"/><rect x="9" y="11" width="14" height="2.6" fill="#9a9a9a"/><rect x="9" y="19.2" width="14" height="2.6" fill="#9a9a9a"/></svg>
<svg class="b" style="left:1134px;top:1070px;" width="24" height="24" viewBox="0 0 24 24"><rect x="1" y="3" width="22" height="2.6" fill="#9a9a9a"/><rect x="1" y="7.2" width="14" height="2.6" fill="#9a9a9a"/><rect x="1" y="11.3" width="22" height="2.6" fill="#9a9a9a"/><rect x="1" y="15.4" width="14" height="2.6" fill="#9a9a9a"/><rect x="1" y="19.5" width="22" height="2.6" fill="#9a9a9a"/></svg>
<svg class="b" style="left:1187px;top:1070px;" width="24" height="24" viewBox="0 0 24 24"><path d="M6.5 21.5 Q1.2 21.5 1.2 16.5 Q1.2 12 5.2 11.2 Q6 7.5 10.5 5.5 L10.8 6.5 Q8 8.5 8 11.5 Q11.5 12.5 11.5 16.3 Q11.3 21.5 6.5 21.5 Z M18 21.5 Q12.7 21.5 12.7 16.5 Q12.7 12 16.7 11.2 Q17.5 7.5 22 5.5 L22.3 6.5 Q19.5 8.5 19.5 11.5 Q23 12.5 23 16.3 Q22.8 21.5 18 21.5 Z" fill="#9a9a9a"/></svg>
<svg class="b" style="left:1241px;top:1070px;" width="24" height="24" viewBox="0 0 24 24"><circle cx="12" cy="12" r="10.2" fill="none" stroke="#9a9a9a" stroke-width="1.9"/><circle cx="8.2" cy="8.5" r="1.4" fill="#9a9a9a"/><circle cx="15.8" cy="8.5" r="1.4" fill="#9a9a9a"/><path d="M5.8 12.3 H18.2 Q17.8 18 12 18 Q6.2 18 5.8 12.3 Z" fill="#9a9a9a"/></svg>
<svg class="b" style="left:1294px;top:1070px;" width="24" height="24" viewBox="0 0 24 24"><rect x="1.2" y="3.2" width="21.6" height="18.6" fill="none" stroke="#9a9a9a" stroke-width="1.8"/><circle cx="17" cy="7.5" r="2" fill="#9a9a9a"/><path d="M3.5 19.5 V15 L8.5 9.5 L13 14.5 L16 12 L20.5 16 V19.5 Z" fill="#9a9a9a"/></svg>
<svg class="b" style="left:1348px;top:1070px;" width="24" height="24" viewBox="0 0 24 24"><rect x="1.2" y="3.2" width="21.6" height="18.6" fill="none" stroke="#9a9a9a" stroke-width="1.8"/><path d="M1.2 9.5 H22.8 M1.2 15.7 H22.8 M8.4 3.2 V21.8 M15.6 3.2 V21.8" stroke="#9a9a9a" stroke-width="1.3"/></svg>
<svg class="b" style="left:1402px;top:1070px;" width="24" height="24" viewBox="0 0 24 24"><path d="M1 7.5 Q1 4 4.5 3.8 Q12 3.3 19.5 3.8 Q23 4 23 7.5 V17 Q23 20.5 19.5 20.7 Q12 21.3 4.5 20.7 Q1 20.5 1 17 Z" fill="#9a9a9a"/><path d="M9 8 L16 12.2 L9 16.5 Z" fill="#f1f1f1"/></svg>
<svg class="b" style="left:1455px;top:1070px;" width="24" height="24" viewBox="0 0 24 24"><path d="M1.5 6.5 L6.5 12 L1.5 17.5" fill="none" stroke="#9a9a9a" stroke-width="1.7"/><rect x="10" y="18.6" width="11" height="1.8" fill="#9a9a9a"/></svg>
<svg class="b" style="left:1509px;top:1070px;" width="24" height="24" viewBox="0 0 24 24"><path d="M5.5 8 Q8.5 4.5 13 4.8 Q20.5 5.8 20.5 13 Q20.5 17.5 17.5 20.8" fill="none" stroke="#9a9a9a" stroke-width="2.4"/><path d="M1 3.8 L1 10.8 L8.5 10.8 Z" fill="#9a9a9a"/></svg>
<svg class="b" style="left:1562px;top:1070px;" width="24" height="24" viewBox="0 0 24 24"><path d="M18.5 8 Q15.5 4.5 11 4.8 Q3.5 5.8 3.5 13 Q3.5 17.5 6.5 20.8" fill="none" stroke="#9a9a9a" stroke-width="2.4"/><path d="M23 3.8 L23 10.8 L15.5 10.8 Z" fill="#9a9a9a"/></svg>
<div class="b" style="left:520px;top:559px;width:519px;height:358px;background:#fff;border:1px solid #d2d2d2;border-radius:3px;box-sizing:border-box;box-shadow:0 2px 4px rgba(0,0,0,.12)"></div>
<div class="b" style="left:521px;top:567px;width:517px;height:57px;background:#1e9fff"></div>
<div class="t" style="left:537px;top:583px;font-size:22px;line-height:22px;color:#fff;font-weight:normal;">虚拟卡密(邀请码/激活码等)</div>
<div class="t" style="left:537px;top:641px;font-size:22px;line-height:22px;color:#111;font-weight:normal;">固定内容(网盘链接/活动网址等)</div>
<div class="t" style="left:537px;top:698px;font-size:22px;line-height:22px;color:#111;font-weight:normal;">API接口(支持POST/GET提交)</div>
<div class="t" style="left:537px;top:753px;font-size:22px;line-height:22px;color:#d2d2d2;font-weight:normal;">串货商品(待开放)</div>
<div class="t" style="left:537px;top:812px;font-size:22px;line-height:22px;color:#111;font-weight:normal;">手动发货(实物商品/手动充值等)</div>
<div class="t" style="left:537px;top:867px;font-size:22px;line-height:22px;color:#111;font-weight:normal;">验证系统卡密(出售验证系统中的卡密)</div>
<div class="b" style="left:0;top:0;width:1896px;height:1362px;border-radius:0 0 8px 8px;box-shadow:0 0 0 1px #4a4a4a,0 0 0 30px #1c1c1c"></div>
</body></html>
